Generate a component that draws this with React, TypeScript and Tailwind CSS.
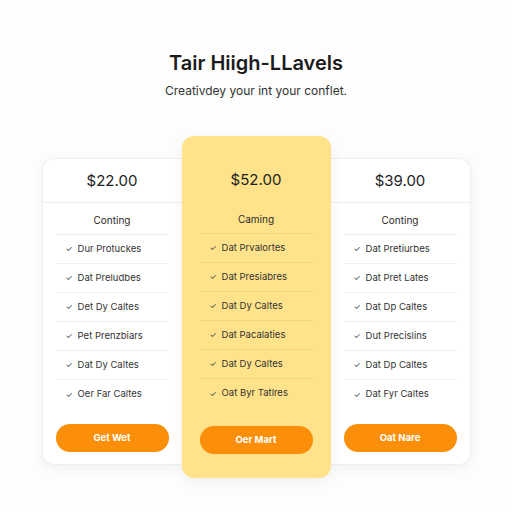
import React from 'react';

type Plan = {
  price: string;
  label: string;
  features: string[];
  cta: string;
  featured?: boolean;
};

const plans: Plan[] = [
  {
    price: '$22.00',
    label: 'Conting',
    features: ['Dur Protuckes', 'Dat Preludbes', 'Det Dy Caltes', 'Pet Prenzbiars', 'Dat Dy Caltes', 'Oer Far Caltes'],
    cta: 'Get Wet',
  },
  {
    price: '$52.00',
    label: 'Caming',
    features: ['Dat Prvalortes', 'Dat Presiabres', 'Dat Dy Caltes', 'Dat Pacalaties', 'Dat Dy Caltes', 'Oat Byr Tatlres'],
    cta: 'Oer Mart',
    featured: true,
  },
  {
    price: '$39.00',
    label: 'Conting',
    features: ['Dat Pretiurbes', 'Dat Pret Lates', 'Dat Dp Caltes', 'Dut Precislins', 'Dat Dp Caltes', 'Dat Fyr Caltes'],
    cta: 'Oat Nare',
  },
];

function PlanCard({ plan, side }: { plan: Plan; side: 'left' | 'mid' | 'right' }) {
  const featured = plan.featured;
  return (
    <div
      className={`flex flex-col ${
        featured
          ? 'relative z-10 w-[149px] h-[342px] bg-[#ffe28a] rounded-xl shadow-[0_4px_14px_rgba(0,0,0,0.06)] pt-[34px] pb-[24px]'
          : `w-[140px] h-[307px] mt-[22px] bg-white border border-[#efefef] shadow-[0_3px_12px_rgba(0,0,0,0.05)] pt-[12px] pb-[12px] ${
              side === 'left' ? 'rounded-l-xl border-r-0' : 'rounded-r-xl border-l-0 w-[139px]'
            }`
      }`}
    >
      {/* price */}
      <div className={`pb-[11px] border-b ${featured ? 'border-transparent' : 'border-[#ededed]'}`}>
        <div className="text-center text-[15px] leading-[20px] text-[#1e1e1e]">{plan.price}</div>
      </div>
      <div className={`${featured ? 'mx-[18px] border-[#f1d67e]' : 'mx-[13px] border-[#ededed]'} border-b pt-[10px] pb-[7px]`}>
        <div className="text-center text-[10px] leading-[14px] text-[#2a2a2a]">{plan.label}</div>
      </div>
      <ul className={featured ? 'mx-[18px]' : 'mx-[13px]'}>
        {plan.features.map((f, i) => (
          <li
            key={i}
            className={`h-[29px] flex items-center pl-[10px] text-[9.5px] text-[#333] ${
              i < plan.features.length - 1 ? (featured ? 'border-b border-[#f1d67e]' : 'border-b border-[#efefef]') : ''
            }`}
          >
            <span className="text-[8px] text-[#444] mr-[5px]">✓</span>
            {f}
          </li>
        ))}
      </ul>
      <div className="flex-1" />
      <button
        className={`${featured ? 'mx-[18px]' : 'mx-[13px]'} h-[28px] rounded-full bg-[#fb8f0a] text-white text-[9.5px] font-bold`}
      >
        {plan.cta}
      </button>
    </div>
  );
}

export default function App() {
  return (
    <div className="w-[512px] h-[512px] bg-[#fdfdfd] overflow-hidden" style={{ fontFamily: 'Inter, "Open Sans", sans-serif' }}>
      <div className="pt-[50px] text-center">
        <h1 className="text-[20px] leading-[26px] font-semibold text-[#1b1b1b]">Tair Hiigh-LLavels</h1>
        <p className="mt-[7px] text-[12px] leading-[16px] text-[#333]">Creativdey your int your conflet.</p>
      </div>
      <div className="mt-[37px] flex items-start justify-center">
        <PlanCard plan={plans[0]} side="left" />
        <PlanCard plan={plans[1]} side="mid" />
        <PlanCard plan={plans[2]} side="right" />
      </div>
    </div>
  );
}
